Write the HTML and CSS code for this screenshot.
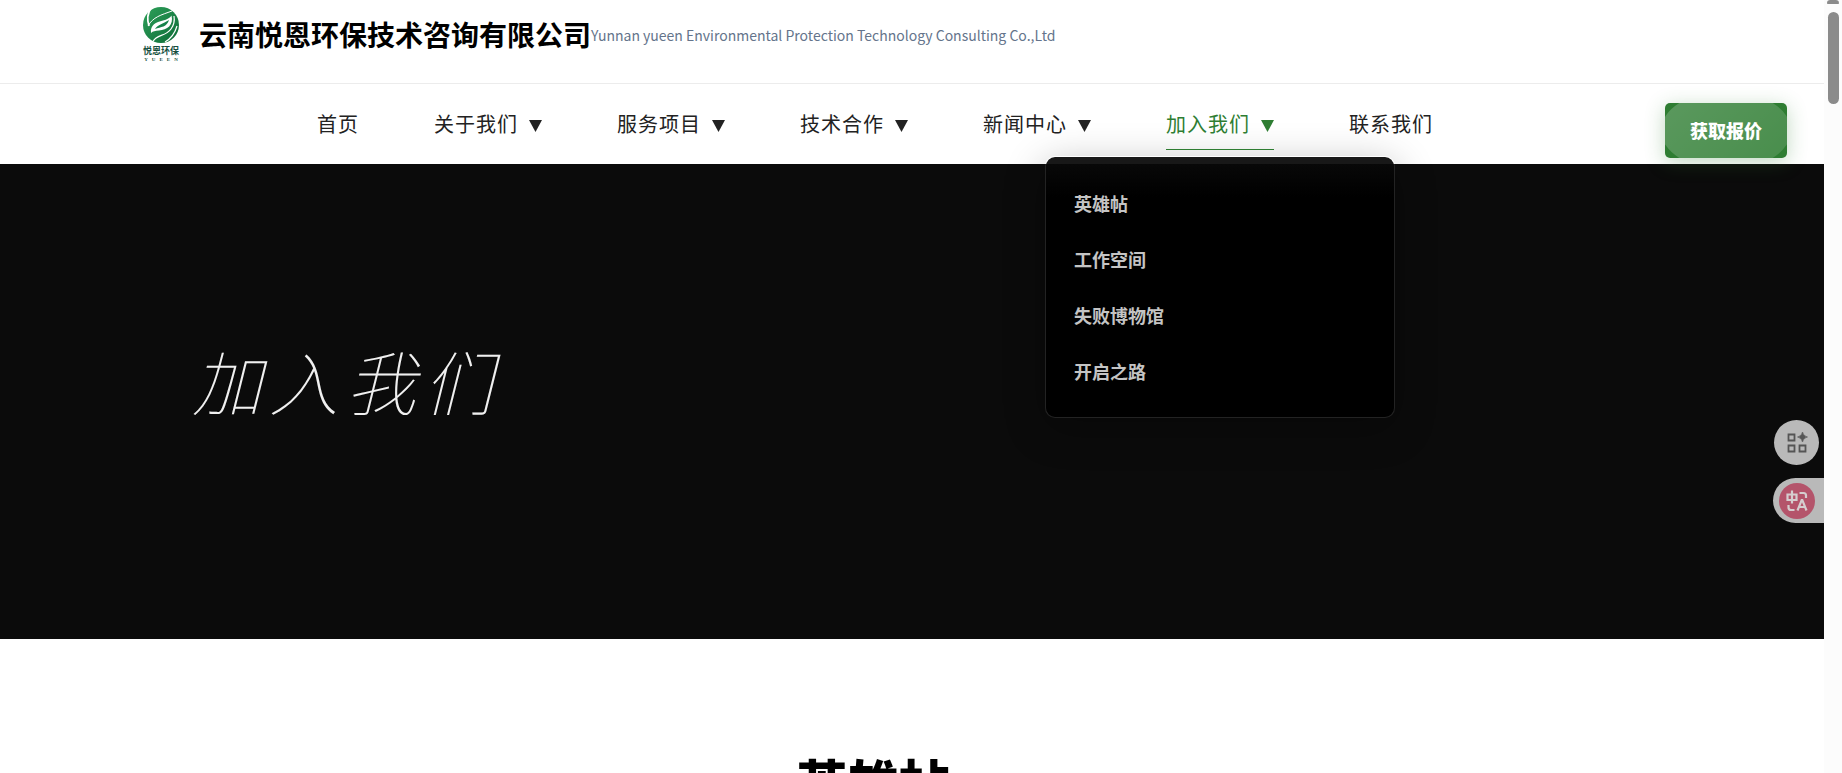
FILE: index.html
```html
<!DOCTYPE html>
<html lang="zh-CN">
<head>
<meta charset="utf-8">
<title>加入我们</title>
<link rel="stylesheet" href="styles.css">
</head>
<body>
<div class="page">
  <header class="header">
    <div class="brand-bar">
      <a class="logo" href="#">
        <svg class="logo-mark" viewBox="0 0 36 36" aria-hidden="true">
          <defs>
            <linearGradient id="leaf" x1="0" y1="0" x2="1" y2="1">
              <stop offset="0" stop-color="#2fa15a"/>
              <stop offset="1" stop-color="#0c6b37"/>
            </linearGradient>
          </defs>
          <circle cx="18" cy="18" r="18" fill="url(#leaf)"/>
          <path d="M8 1C4 7 4 13 6 19" fill="none" stroke="#fff" stroke-width="1.800"/>
          <path d="M5 19C10 10 18 8 29 4" fill="none" stroke="#fff" stroke-width="1"/>
          <path d="M8 26C7 18 13 15 20 13.500C24 12.500 27 11 28.500 8.500C31 18 24 23 16 23.500C12 24 10 24 8 26Z" fill="#fff"/>
          <path d="M12 22C14 18 20 17 26 13C24 20 18 20 12 22Z" fill="#16834a"/>
          <path d="M10 34.500C14 27 22 30 28 22C31 18 32 15 31 9M22 35C29 31 32 26 34 19" fill="none" stroke="#fff" stroke-width="1.200"/>
        </svg>
        <span class="logo-name">悦恩环保</span>
        <span class="logo-latin">YUEEN</span>
      </a>
      <span class="company">云南悦恩环保技术咨询有限公司</span>
      <span class="company-en">Yunnan yueen Environmental Protection Technology Consulting Co.,Ltd</span>
    </div>
    <div class="nav-bar">
      <nav class="nav">
        <a class="nav-link" href="#">首页</a>
        <a class="nav-link" href="#">关于我们<svg class="caret" viewBox="0 0 13 12" aria-hidden="true"><path d="M0 0H13L6.500 12Z"/></svg></a>
        <a class="nav-link" href="#">服务项目<svg class="caret" viewBox="0 0 13 12" aria-hidden="true"><path d="M0 0H13L6.500 12Z"/></svg></a>
        <a class="nav-link" href="#">技术合作<svg class="caret" viewBox="0 0 13 12" aria-hidden="true"><path d="M0 0H13L6.500 12Z"/></svg></a>
        <a class="nav-link" href="#">新闻中心<svg class="caret" viewBox="0 0 13 12" aria-hidden="true"><path d="M0 0H13L6.500 12Z"/></svg></a>
        <div class="nav-group">
          <a class="nav-link active" href="#">加入我们<svg class="caret" viewBox="0 0 13 12" aria-hidden="true"><path d="M0 0H13L6.500 12Z"/></svg></a>
          <div class="menu">
            <a class="menu-link" href="#">英雄帖</a>
            <a class="menu-link" href="#">工作空间</a>
            <a class="menu-link" href="#">失败博物馆</a>
            <a class="menu-link" href="#">开启之路</a>
          </div>
        </div>
        <a class="nav-link" href="#">联系我们</a>
      </nav>
      <button class="quote" type="button"><span class="quote-text">获取报价</span></button>
    </div>
  </header>
  <main>
    <section class="hero"><h1 class="hero-title">加入我们</h1></section>
    <section class="intro"><h2 class="intro-title">英雄帖</h2></section>
  </main>
  <div class="tools">
    <button class="tool-round" type="button" aria-label="小工具">
      <svg class="grid-icon" viewBox="0 0 20 20" aria-hidden="true">
        <path d="M1.500 1.500H7.500V7.500H1.500ZM1.500 12.500H7.500V18.500H1.500ZM12.500 12.500H18.500V18.500H12.500Z" fill="none" stroke="#555" stroke-width="1.800"/>
        <path d="M15.500 -1Q16.300 3.200 20.500 4Q16.300 4.800 15.500 9Q14.700 4.800 10.500 4Q14.700 3.200 15.500 -1Z" fill="#555" stroke="#555" stroke-width=".6"/>
      </svg>
    </button>
    <button class="tool-tab" type="button" aria-label="翻译">
      <svg class="translate-icon" viewBox="0 0 36 36" aria-hidden="true">
        <circle cx="18" cy="18" r="18" fill="#b4546b"/>
        <g fill="none" stroke="#d5cdcf" stroke-width="2.200">
          <path d="M8.500 11.500H17.500V17H8.500ZM13 7.500V20.500"/>
          <path d="M20.500 10H24.500Q27 10 27 12.500V15"/>
          <path d="M9.500 22V24.500Q9.500 27 12 27H15.500"/>
          <path d="M18.500 27.500L22.700 17H23.300L27.500 27.500M20 24H26"/>
        </g>
      </svg>
    </button>
  </div>
</div>
<div class="scrollbar" aria-hidden="true"><span class="scroll-arrow"></span><span class="scroll-thumb"></span></div>
</body>
</html>
```
FILE: styles.css
```css
* {
  box-sizing: border-box;
}

body {
  margin: 0;
  height: 100vh;
  display: flex;
  overflow: hidden;
  background: #fff;
  color: #000;
  font-family: "Noto Sans CJK SC", sans-serif;
}

a {
  color: inherit;
  text-decoration: none;
}

button {
  border: 0;
  padding: 0;
  font: inherit;
  cursor: pointer;
}

.page {
  flex: 1;
  min-width: 0;
  height: 100vh;
  position: relative;
  overflow: hidden;
}

.header {
  position: relative;
  z-index: 2;
}

.brand-bar {
  display: flex;
  align-items: flex-start;
  height: 84px;
  padding: 7px 143px 0;
  border-bottom: 1px solid #ececec;
}

.logo {
  display: flex;
  flex-direction: column;
  align-items: center;
  width: 36px;
  margin-right: 20px;
}

.logo-mark {
  width: 36px;
  height: 36px;
}

.logo-name {
  font: 700 9px/12px "Noto Sans CJK SC", sans-serif;
  color: #17503f;
  white-space: nowrap;
  margin-top: 2px;
}

.logo-latin {
  font: 700 5px/6px "Liberation Serif", serif;
  letter-spacing: 4px;
  margin-right: -4px;
  color: #17503f;
}

.company {
  font-size: 28px;
  font-weight: 700;
  line-height: 54px;
}

.company-en {
  font-size: 14px;
  line-height: 56px;
  color: #64748b;
}

.nav-bar {
  display: flex;
  align-items: flex-start;
  justify-content: space-between;
  height: 80px;
  padding: 19px 37px 0 317px;
}

.nav {
  display: flex;
  gap: 75px;
}

.nav-group {
  position: relative;
}

.nav-link {
  display: flex;
  align-items: center;
  height: 47px;
  padding-bottom: 6px;
  border-bottom: 1px solid transparent;
  font-size: 20px;
  letter-spacing: 1px;
  white-space: nowrap;
  color: #222;
}

.active {
  position: relative;
  z-index: 1;
  color: #2e7d32;
  border-bottom-color: #2e7d32;
}

.caret {
  width: 13px;
  height: 12px;
  margin: 6px 0 0 11px;
  fill: currentColor;
}

.menu {
  position: absolute;
  top: 53px;
  left: 50%;
  width: 350px;
  margin-left: -175px;
  padding: 18px 28px;
  border: 1px solid rgba(255, 255, 255, 0.1);
  border-radius: 10px;
  background: linear-gradient(#181818 0, #181818 7px, #080808 7px, #000 40px);
  background-clip: padding-box;
  box-shadow: 0 10px 40px rgba(0, 0, 0, 0.3);
}

.menu-link {
  display: block;
  font-size: 18px;
  font-weight: 700;
  line-height: 56px;
  color: #c4c4c4;
}

.quote {
  position: relative;
  width: 122px;
  height: 55px;
  overflow: hidden;
  border-radius: 5px;
  background: #2e7d32;
  box-shadow: 0 4px 20px rgba(46, 125, 50, 0.3);
  color: #fff;
}

.quote::before {
  content: "";
  position: absolute;
  inset: -12px -4px;
  border-radius: 50%;
  background: linear-gradient(135deg, rgba(255, 255, 255, 0.22), rgba(255, 255, 255, 0.12));
}

.quote-text {
  position: relative;
  font-size: 18px;
  font-weight: 900;
  line-height: 55px;
}

.hero {
  display: flex;
  align-items: center;
  height: 475px;
  padding: 0 192px;
  background: #0b0b0b;
}

.hero-title {
  margin: 0 0 44px;
  font-size: 70px;
  font-style: italic;
  font-weight: 100;
  line-height: 104px;
  letter-spacing: 7px;
  color: #f0f0f0;
}

.intro {
  padding: 112px 78px 80px 0;
  text-align: center;
}

.intro-title {
  margin: 0;
  font-size: 51px;
  font-weight: 900;
  line-height: 60px;
}

.tools {
  position: absolute;
  top: 420px;
  right: 0;
  z-index: 3;
  display: flex;
  flex-direction: column;
  align-items: flex-end;
  gap: 13px;
}

.tool-round {
  display: grid;
  place-items: center;
  width: 45px;
  height: 45px;
  margin-right: 5px;
  border-radius: 50%;
  background: #b9b9b9;
}

.grid-icon {
  width: 20px;
  height: 20px;
  overflow: visible;
}

.tool-tab {
  display: flex;
  align-items: center;
  width: 51px;
  height: 45px;
  padding-left: 6px;
  border-radius: 23px 0 0 23px;
  background: #b9b9b9;
}

.translate-icon {
  width: 36px;
  height: 36px;
}

.scrollbar {
  display: flex;
  flex-direction: column;
  align-items: center;
  gap: 8px;
  width: 18px;
  background: #fcfcfc;
}

.scroll-arrow {
  width: 12px;
  height: 4px;
  border-radius: 4px 4px 1px 1px;
  background: #8b8b8b;
}

.scroll-thumb {
  width: 11px;
  height: 92px;
  border-radius: 6px;
  background: #8b8b8b;
}
```
